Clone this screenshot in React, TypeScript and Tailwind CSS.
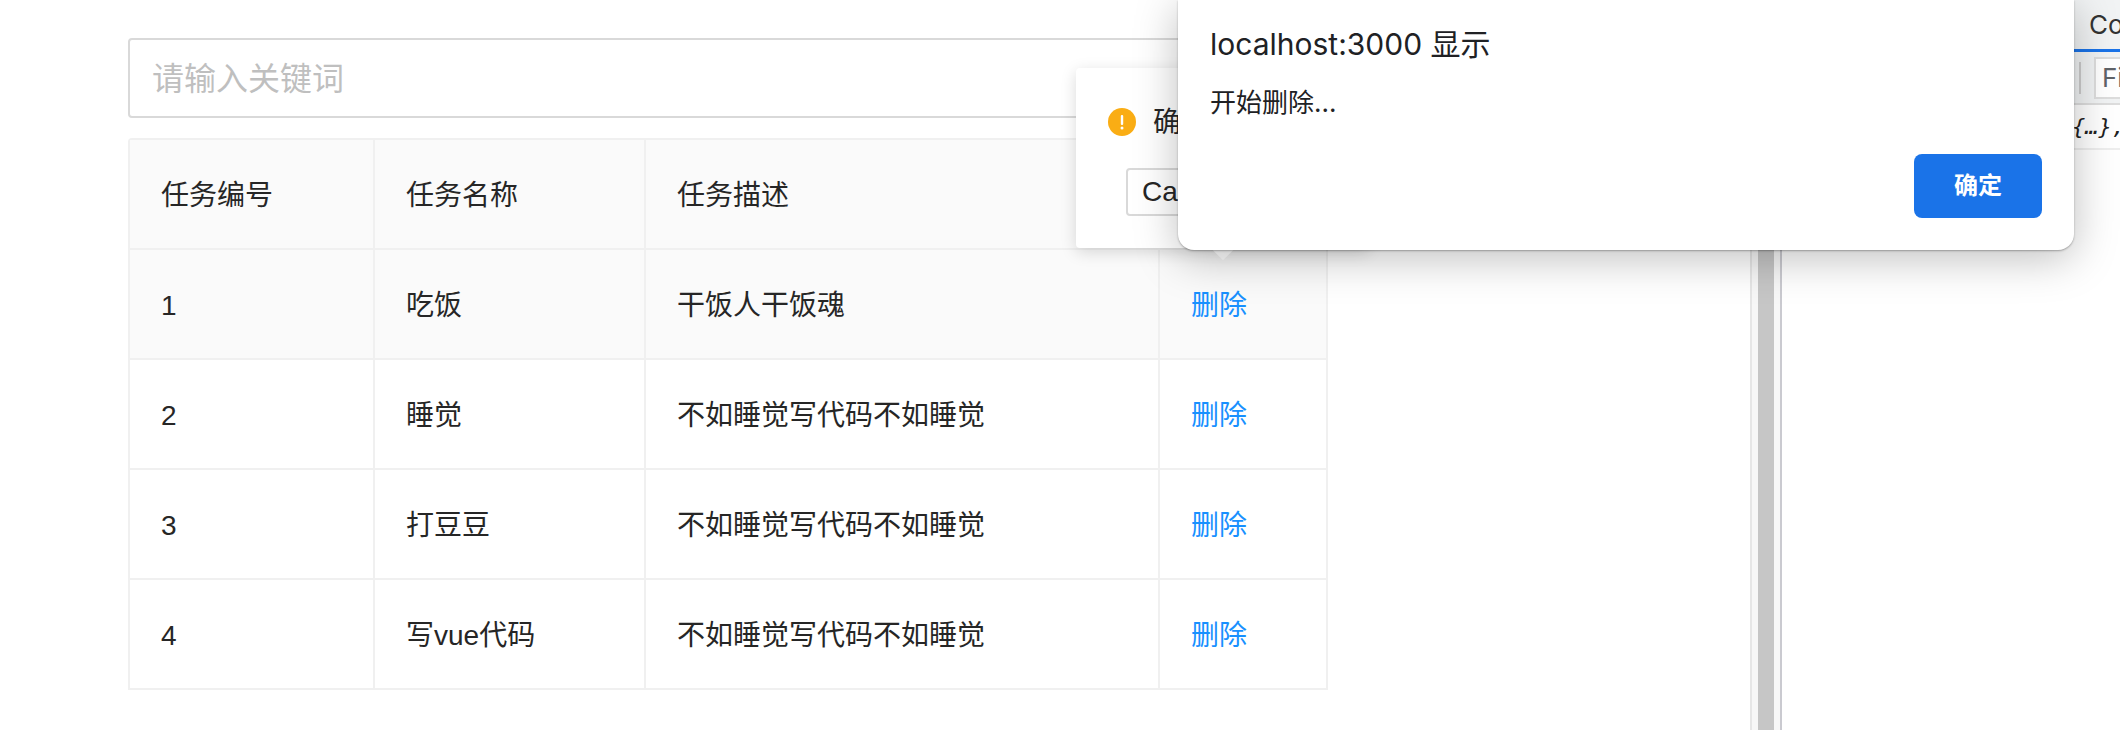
import React from "react";

const rows = [
  ["1", "吃饭", "干饭人干饭魂"],
  ["2", "睡觉", "不如睡觉写代码不如睡觉"],
  ["3", "打豆豆", "不如睡觉写代码不如睡觉"],
  ["4", "写vue代码", "不如睡觉写代码不如睡觉"],
];
const cell = "border-r-2 border-b-2 border-[#f0f0f0] pl-[31px] pr-[29px] pt-[34px] pb-[30px] h-[110px] text-left font-normal leading-[44px] align-middle";
const fonts = "font-['Liberation_Sans','Noto_Sans_CJK_SC',sans-serif]";
const sysFonts = "font-['Inter','Noto_Sans_CJK_SC',sans-serif]";

export default function App() {
  return (
    <div className={`relative flex h-[730px] w-[2120px] overflow-hidden bg-white text-[#262626] ${fonts}`}>
      <main className="flex w-[1750px] flex-col gap-[20px] pl-[128px] pt-[38px]">
        <input
          placeholder="请输入关键词"
          className="h-[80px] w-[1200px] rounded-[4px] border-2 border-[#d9d9d9] bg-white px-[22px] pt-[2px] text-[32px] outline-none placeholder:text-[#bfbfbf]"
        />
        <table className="w-[1200px] table-fixed border-separate border-spacing-0 rounded-t-[4px] border-l-2 border-t-2 border-[#f0f0f0] text-[28px]">
          <colgroup>
            <col className="w-[245px]" />
            <col className="w-[271px]" />
            <col className="w-[514px]" />
            <col />
          </colgroup>
          <thead>
            <tr className="bg-[#fafafa]">
              <th className={cell}>任务编号</th>
              <th className={cell}>任务名称</th>
              <th className={cell}>任务描述</th>
              <th className={cell}>操作</th>
            </tr>
          </thead>
          <tbody>
            {rows.map((r, i) => (
              <tr key={r[0]} className={i === 0 ? "bg-[#fafafa]" : "bg-white"}>
                <td className={cell}>{r[0]}</td>
                <td className={cell}>{r[1]}</td>
                <td className={cell}>{r[2]}</td>
                <td className={`${cell} text-[#1890ff]`}>删除</td>
              </tr>
            ))}
          </tbody>
        </table>
      </main>

      <div className="flex w-[32px] shrink-0">
        <div className="w-[2px] bg-[#e6e6e6]" />
        <div className="w-[6px] bg-[#f7f7f7]" />
        <div className="w-[16px] bg-[#c6c6c6]" />
        <div className="w-[6px] bg-[#f7f7f7]" />
        <div className="w-[2px] bg-[#cacad0]" />
      </div>

      <aside className={`flex min-w-0 flex-1 flex-col overflow-hidden bg-white ${sysFonts}`}>
        <div className="flex h-[52px] items-center border-b-[3px] border-[#1a73e8] bg-[#f1f3f4] pl-[307px] text-[26px] whitespace-nowrap text-[#333]">
          Console
        </div>
        <div className="flex h-[53px] items-center border-b-2 border-[#dddddd] bg-[#f1f3f4] pl-[297px]">
          <div className="h-[32px] w-[2px] shrink-0 bg-[#cccccc]" />
          <div className="ml-[13px] flex h-[42px] w-[200px] shrink-0 items-center border-2 border-[#dddddd] bg-white pl-[6px] text-[26px] text-[#5f6368]">
            Filter
          </div>
        </div>
        <div className="flex h-[45px] items-center border-b-2 border-[#eeeeee] pl-[290px] text-[22px] whitespace-nowrap text-[#222] italic font-['DejaVu_Sans_Mono',monospace]">
          {"{…},"}
        </div>
      </aside>

      {/* Popconfirm */}
      <div className="absolute left-[1076px] top-[68px] h-[180px] w-[292px] rounded-[4px] bg-white shadow-[0_4px_16px_rgba(0,0,0,0.15)]">
        <div className="absolute left-[139px] top-[173px] h-[16px] w-[16px] rotate-45 bg-white" />
        <div className="relative flex items-center gap-[17px] pl-[32px] pt-[32px] text-[28px] leading-[44px]">
          <svg width="28" height="28" viewBox="0 0 28 28" aria-hidden="true" className="shrink-0">
            <circle cx="14" cy="14" r="14" fill="#faad14" />
            <rect x="12.8" y="7" width="2.4" height="10" rx="1" fill="#fff" />
            <circle cx="14" cy="20" r="1.5" fill="#fff" />
          </svg>
          <span className="relative top-[1px] whitespace-nowrap">确定删除吗？</span>
        </div>
        <div className="relative ml-[50px] mt-[24px] flex gap-[16px]">
          <button className="h-[48px] rounded-[4px] border-2 border-[#d9d9d9] bg-white px-[14px] text-[28px] leading-none">
            Cancel
          </button>
        </div>
      </div>

      {/* Browser alert */}
      <div className={`absolute left-[1178px] top-0 flex h-[250px] w-[896px] flex-col rounded-b-[16px] bg-white pl-[32px] pr-[32px] shadow-[0_1px_2px_rgba(0,0,0,0.3),0_8px_44px_rgba(0,0,0,0.26)] ${sysFonts}`}>
        <div className="mt-[25px] text-[30px] leading-[38px] text-[#202124]">localhost:3000 显示</div>
        <div className="mt-[24px] text-[26px] leading-[32px] text-[#202124]">开始删除...</div>
        <div className="mt-auto mb-[32px] flex justify-end">
          <button className="h-[64px] w-[128px] rounded-[8px] bg-[#1a73e8] text-[24px] font-bold text-white">确定</button>
        </div>
      </div>
    </div>
  );
}
